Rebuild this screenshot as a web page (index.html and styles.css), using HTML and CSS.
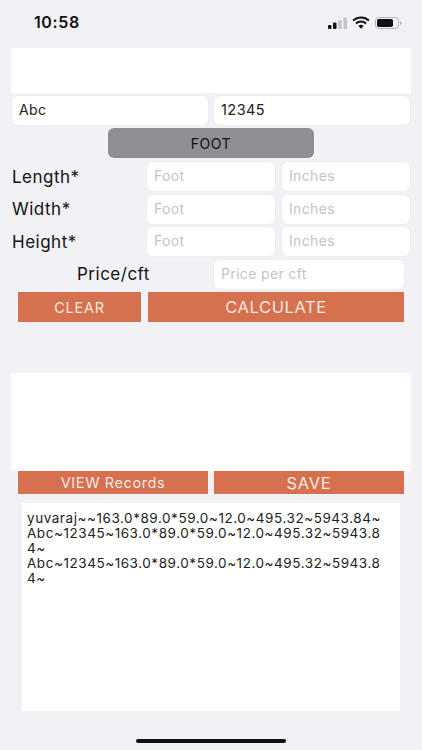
FILE: index.html
```html
<!DOCTYPE html>
<html lang="en">
<head>
<meta charset="utf-8">
<title>Calculator</title>
<link rel="stylesheet" href="styles.css">
</head>
<body>
<div class="screen">
  <header class="status">
    <span class="time">10:58</span>
    <span class="status-icons">
      <svg class="signal" width="19" height="12" viewBox="0 0 19 12"><rect x="0" y="8" width="3.500" height="4" rx="1" fill="#111"/><rect x="5" y="5.500" width="3.500" height="6.500" rx="1" fill="#111"/><rect x="10.200" y="3" width="3.500" height="9" rx="1" fill="#c4c4c8"/><rect x="15.500" y="0.500" width="3.500" height="11.500" rx="1" fill="#c4c4c8"/></svg>
      <svg class="wifi" width="18" height="13" viewBox="0 0 17 12"><path d="M1 4.200C5.200 .3 11.800 .3 16 4.200" fill="none" stroke="#111" stroke-width="1.900"/><path d="M3.700 6.900C6.400 4.500 10.600 4.500 13.300 6.900" fill="none" stroke="#111" stroke-width="1.900"/><path d="M6.100 9.300a3.500 3.500 0 0 1 4.800 0L8.500 11.800z" fill="#111"/></svg>
      <svg class="battery" width="27" height="12" viewBox="0 0 27 12"><rect x="0.500" y="0.500" width="23" height="11" rx="3.200" fill="none" stroke="#b4b4b8"/><rect x="2" y="2" width="16" height="8" rx="1.800" fill="#111"/><path d="M25 4.200c1 .3 1.500 1 1.500 1.800s-.5 1.500-1.500 1.800z" fill="#b4b4b8"/></svg>
    </span>
  </header>

  <div class="banner"></div>

  <div class="row row-party">
    <div class="field">Abc</div>
    <div class="field digits">12345</div>
  </div>

  <div class="unit-wrap"><button class="unit">FOOT</button></div>

  <div class="dim">
    <span class="dim-label">Length*</span>
    <div class="field ph">Foot</div>
    <div class="field ph">Inches</div>
  </div>
  <div class="dim">
    <span class="dim-label">Width*</span>
    <div class="field ph">Foot</div>
    <div class="field ph">Inches</div>
  </div>
  <div class="dim">
    <span class="dim-label">Height*</span>
    <div class="field ph">Foot</div>
    <div class="field ph">Inches</div>
  </div>

  <div class="price">
    <span class="price-label">Price/cft</span>
    <div class="field ph">Price per cft</div>
  </div>

  <div class="actions">
    <button class="btn clear">CLEAR</button>
    <button class="btn calc">CALCULATE</button>
  </div>

  <div class="result"></div>

  <div class="actions2">
    <button class="btn view">VIEW Records</button>
    <button class="btn save">SAVE</button>
  </div>

  <div class="records">yuvaraj~~163.0*89.0*59.0~12.0~495.32~5943.84~<br>Abc~12345~163.0*89.0*59.0~12.0~495.32~5943.8<br>4~<br>Abc~12345~163.0*89.0*59.0~12.0~495.32~5943.8<br>4~</div>

  <div class="home"></div>
</div>
</body>
</html>
```
FILE: styles.css
```css
* { box-sizing: border-box; }
html, body { margin: 0; padding: 0; }
body { background: #f1f1f6; font-family: Inter, "Liberation Sans", sans-serif; color: #111; }
.screen { width: 422px; height: 750px; overflow: hidden; display: flex; flex-direction: column; }

.status { height: 48px; display: flex; justify-content: space-between; align-items: flex-start; padding: 14px 20px 0 34px; }
.time { font-size: 16px; font-weight: 600; line-height: 17px; letter-spacing: .6px; }
.status-icons { display: flex; align-items: center; gap: 5px; height: 17px; }

.banner { height: 45px; margin: 0 11px; background: #fff; }

.field { background: #fff; border-radius: 6px; height: 29px; line-height: 28px; padding-left: 7px; font-size: 14px; letter-spacing: .35px; color: #222; box-shadow: 0 0 0 .5px #e8e8ee; }
.field.digits { font-size: 14.500px; letter-spacing: .45px; }
.field.ph { color: #c4c4c8; }

.row-party { display: grid; grid-template-columns: 196px 196px; column-gap: 6px; margin: 3px 12px 0; }

.unit-wrap { display: flex; justify-content: center; margin-top: 3px; }
.unit { width: 206px; height: 30px; border: 0; border-radius: 6px; background: #8e8e93; color: #111; font: inherit; font-size: 14px; letter-spacing: .5px; padding: 0; }

.dim { display: grid; grid-template-columns: 128px 128px 128px; column-gap: 7px; align-items: center; margin: 3.500px 12px 0; }
.unit-wrap + .dim { margin-top: 4px; }
.dim-label { font-size: 17px; letter-spacing: .5px; }

.price { display: flex; margin: 4px 18px 0 0; }
.price-label { width: 214px; padding-left: 77px; font-size: 17px; letter-spacing: .5px; line-height: 29px; }
.price .field { flex: 1; }

.btn { border: 0; padding: 0; background: #d6714f; color: #f7e9e2; font: inherit; }
.actions { display: grid; grid-template-columns: 123px 256px; column-gap: 7px; margin: 3px 18px 0; }
.actions .btn { height: 30px; }
.clear { font-size: 14.500px; letter-spacing: .7px; }
.calc { font-size: 16.500px; letter-spacing: .6px; }

.result { height: 98px; margin: 51px 11px 0; background: #fff; }

.actions2 { display: grid; grid-template-columns: 190px 190px; column-gap: 6px; margin: 0 18px; }
.actions2 .btn { height: 23px; }
.view { font-size: 14.500px; letter-spacing: .6px; }
.save { font-size: 16.500px; letter-spacing: .7px; }

.records { height: 208px; margin: 9px 22px 0; padding: 8px 5px; background: #fff; font-size: 13.500px; letter-spacing: .55px; line-height: 15px; color: #222; white-space: nowrap; }

.home { width: 150px; height: 4px; margin: 28px auto 0; background: #111; border-radius: 2px; }
```
